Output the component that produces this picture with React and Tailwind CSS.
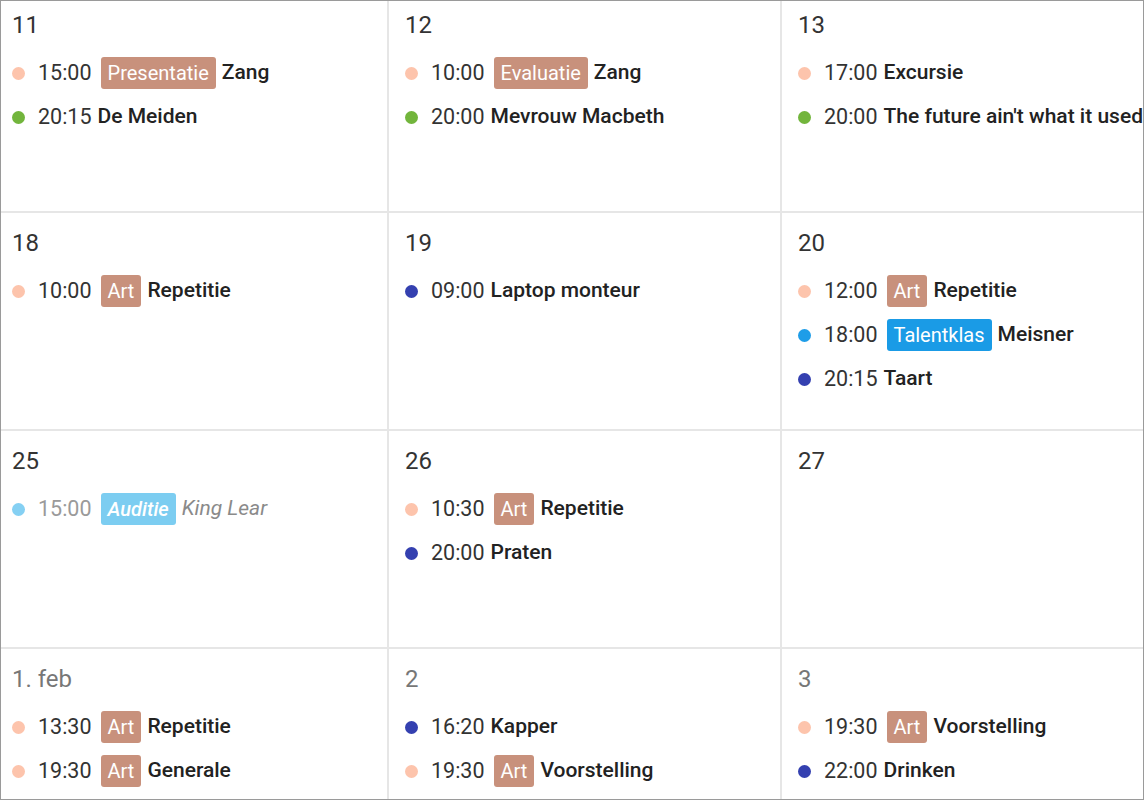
const days = [
    { label: '11', events: [
        { time: '15:00', dot: 'bg-[#fdc4ac]', tag: 'Presentatie', tagBg: 'bg-[#c8917c]', title: 'Zang' },
        { time: '20:15', dot: 'bg-[#72b53c]', title: 'De Meiden' },
    ] },
    { label: '12', events: [
        { time: '10:00', dot: 'bg-[#fdc4ac]', tag: 'Evaluatie', tagBg: 'bg-[#c8917c]', title: 'Zang' },
        { time: '20:00', dot: 'bg-[#72b53c]', title: 'Mevrouw Macbeth' },
    ] },
    { label: '13', events: [
        { time: '17:00', dot: 'bg-[#fdc4ac]', title: 'Excursie' },
        { time: '20:00', dot: 'bg-[#72b53c]', title: "The future ain't what it used to be" },
    ] },
    { label: '18', events: [
        { time: '10:00', dot: 'bg-[#fdc4ac]', tag: 'Art', tagBg: 'bg-[#c8917c]', title: 'Repetitie' },
    ] },
    { label: '19', events: [
        { time: '09:00', dot: 'bg-[#3440b0]', title: 'Laptop monteur' },
    ] },
    { label: '20', events: [
        { time: '12:00', dot: 'bg-[#fdc4ac]', tag: 'Art', tagBg: 'bg-[#c8917c]', title: 'Repetitie' },
        { time: '18:00', dot: 'bg-[#1e9de8]', tag: 'Talentklas', tagBg: 'bg-[#1a9be6]', title: 'Meisner' },
        { time: '20:15', dot: 'bg-[#3440b0]', title: 'Taart' },
    ] },
    { label: '25', events: [
        { time: '15:00', dot: 'bg-[#85d0f3]', tag: 'Auditie', tagBg: 'bg-[#7ccdf1]', title: 'King Lear', faded: true },
    ] },
    { label: '26', events: [
        { time: '10:30', dot: 'bg-[#fdc4ac]', tag: 'Art', tagBg: 'bg-[#c8917c]', title: 'Repetitie' },
        { time: '20:00', dot: 'bg-[#3440b0]', title: 'Praten' },
    ] },
    { label: '27', events: [] },
    { label: '1. feb', other: true, events: [
        { time: '13:30', dot: 'bg-[#fdc4ac]', tag: 'Art', tagBg: 'bg-[#c8917c]', title: 'Repetitie' },
        { time: '19:30', dot: 'bg-[#fdc4ac]', tag: 'Art', tagBg: 'bg-[#c8917c]', title: 'Generale' },
    ] },
    { label: '2', other: true, events: [
        { time: '16:20', dot: 'bg-[#3440b0]', title: 'Kapper' },
        { time: '19:30', dot: 'bg-[#fdc4ac]', tag: 'Art', tagBg: 'bg-[#c8917c]', title: 'Voorstelling' },
    ] },
    { label: '3', other: true, events: [
        { time: '19:30', dot: 'bg-[#fdc4ac]', tag: 'Art', tagBg: 'bg-[#c8917c]', title: 'Voorstelling' },
        { time: '22:00', dot: 'bg-[#3440b0]', title: 'Drinken' },
    ] },
];

const EventRow = ({ ev }) => (
    <div className="flex items-center h-[44px] whitespace-nowrap text-[21px]">
        <span className={`w-[13px] h-[13px] rounded-full shrink-0 ${ev.dot}`} />
        <span className={`ml-[13px] text-[21.5px] ${ev.faded ? 'text-[#9a9a9a]' : 'text-[#333]'}`}>{ev.time}</span>
        {ev.tag && (
            <span className={`ml-[9px] h-[32px] px-[7px] flex items-center rounded-[3px] text-white text-[20px] ${ev.tagBg} ${ev.faded ? 'italic font-medium' : ''}`}>
                {ev.tag}
            </span>
        )}
        <span className={`ml-[6px] ${ev.faded ? 'italic text-[#8a8a8a]' : 'font-medium text-[#222]'}`}>{ev.title}</span>
    </div>
);

const App = () => {
    return (
        <div className="w-[1144px] h-[800px] overflow-hidden border border-[#9a9a9a] bg-white font-['Roboto','Liberation_Sans',sans-serif]">
            {/* Month grid, cropped on every side */}
            <div className="grid grid-cols-[393px_393px_393px] auto-rows-[218px] -ml-[5px] -mt-[6px] w-[1179px]">
                {days.map((day) => (
                    <div key={day.label} className="border-r-2 border-b-2 border-[#e6e6e6] pl-[16px] pt-[14px] overflow-hidden">
                        <div className={`h-[32px] leading-[32px] text-[24px] ${day.other ? 'text-[#777]' : 'text-[#333]'}`}>
                            {day.label}
                        </div>
                        <div className="mt-[10px]">
                            {day.events.map((ev, i) => (
                                <EventRow key={i} ev={ev} />
                            ))}
                        </div>
                    </div>
                ))}
            </div>
        </div>
    );
};

export default App;
